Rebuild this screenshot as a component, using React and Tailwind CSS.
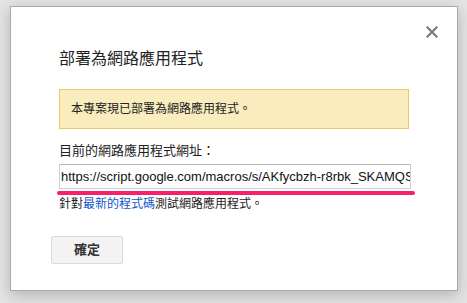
export default function App() {
  const font = { fontFamily: '"Liberation Sans", "Noto Sans CJK TC", sans-serif' };
  return (
    <div className="w-[467px] h-[303px] bg-[#e4e4e4] pt-[6px] pl-[10px] overflow-hidden" style={font}>
      <div className="relative w-[448px] h-[285px] bg-white border border-[#aaaaaa] shadow-[0_4px_14px_rgba(0,0,0,0.22)] pl-[48px] pt-[40px]">
        <button className="absolute left-[414px] top-[18px] w-[14px] h-[14px] flex items-center justify-center">
          <svg width="12" height="12" viewBox="0 0 12 12">
            <path d="M1.5 1.5 L10.5 10.5 M10.5 1.5 L1.5 10.5" stroke="#7a7a7a" strokeWidth="2.2" strokeLinecap="square" />
          </svg>
        </button>
        <div className="text-[16px] leading-[24px] text-[#222]">部署為網路應用程式</div>
        <div className="mt-[18px] w-[350px] h-[40px] bg-[#f9edbe] border border-[#f0c36d] pl-[11px] flex items-center text-[12px] text-[#222]">
          本專案現已部署為網路應用程式。
        </div>
        <div className="mt-[14px] text-[13px] leading-[16px] text-[#222]">目前的網路應用程式網址：</div>
        <div className="mt-[5px] w-[352px] h-[25px] border border-[#d0d0d0] border-t-[#b8b8b8] flex items-center pl-[1px] overflow-hidden whitespace-nowrap text-[13px] text-[#111]">
          https://script.google.com/macros/s/AKfycbzh-r8rbk_SKAMQS
        </div>
        <div className="mt-[2px] -ml-[2px] w-[358px] h-[4px] rounded-full bg-[#f7206a]"></div>
        <div className="mt-[1px] text-[12px] leading-[16px] text-[#222]">
          針對<span className="text-[#1155cc]">最新的程式碼</span>測試網路應用程式。
        </div>
        <button className="mt-[24px] -ml-[8px] w-[72px] h-[28px] bg-[#f3f3f3] border border-[#dcdcdc] rounded-[2px] text-[13px] font-semibold text-[#333] flex items-center justify-center" style={font}>
          確定
        </button>
      </div>
    </div>
  );
}
